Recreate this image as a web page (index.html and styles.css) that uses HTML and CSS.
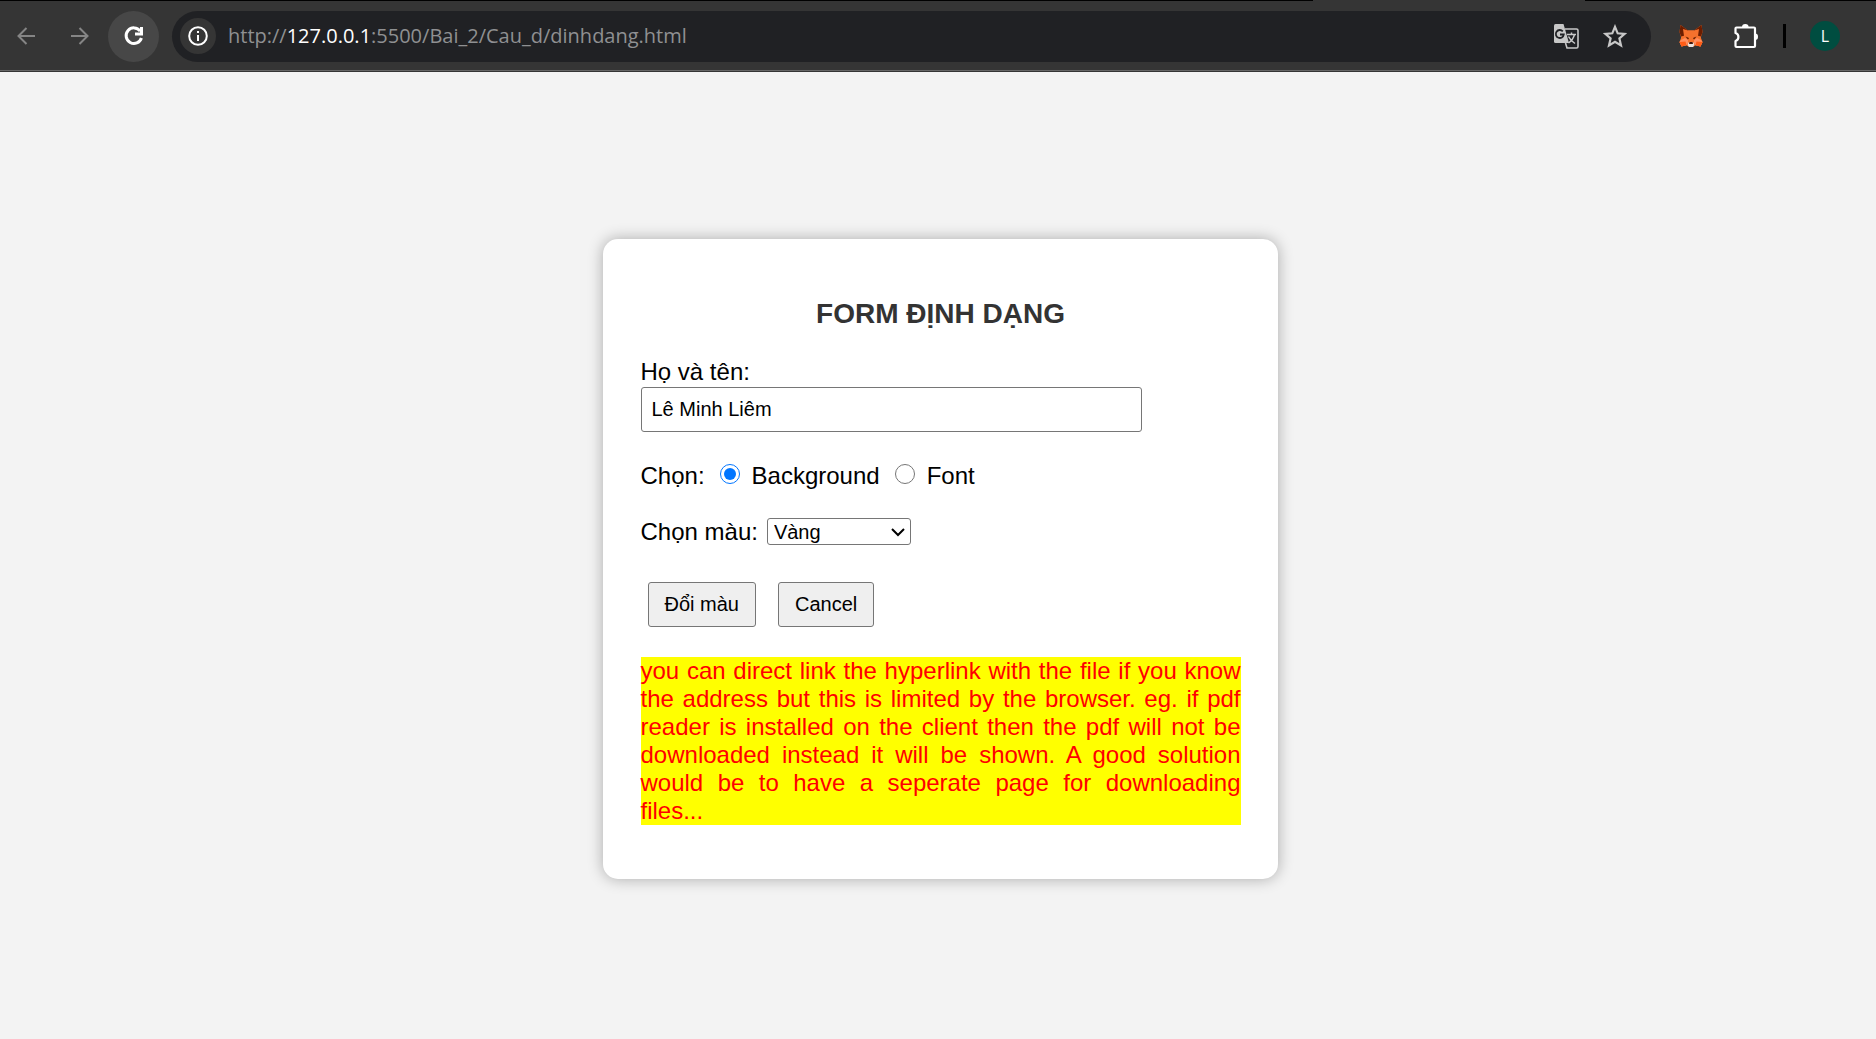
FILE: index.html
```html
<!DOCTYPE html>
<html lang="vi">
<head>
<meta charset="utf-8">
<title>Form định dạng</title>
<link rel="stylesheet" href="styles.css">
</head>
<body>
<header class="toolbar">
  <div class="tab-edge"></div>
  <nav class="nav">
    <button class="nav-btn dim" type="button" aria-label="Back"><svg width="18" height="18" viewBox="0 0 18 18"><path d="M18 9H2M9.500 1L1.500 9l8 8" /></svg></button>
    <button class="nav-btn dim" type="button" aria-label="Forward"><svg width="18" height="18" viewBox="0 0 18 18"><path d="M0 9h16M8.500 1l8 8-8 8" /></svg></button>
    <button class="nav-btn reload" type="button" aria-label="Reload"><svg width="20" height="20" viewBox="0 0 20 20"><path d="M16.200 5A7.800 7.800 0 1 0 17.400 12M17.500 1v7h-6.500" /></svg></button>
  </nav>
  <div class="omnibox">
    <button class="info" type="button" aria-label="Site information"><svg width="20" height="20" viewBox="0 0 20 20"><circle cx="10" cy="10" r="8.800" /><path d="M10 9v6M10 5v2" /></svg></button>
    <div class="url">http://<span class="host">127.0.0.1</span>:5500/Bai_2/Cau_d/dinhdang.html</div>
    <button class="box-btn" type="button" aria-label="Translate"><svg width="26" height="26" viewBox="0 0 26 26"><path d="M2.500 1h8L16 20H2.500Q1 20 1 18.500v-16Q1 1 2.500 1Z" fill="#c7c7c7"/><path d="M12 6h11.500Q25 6 25 7.500v16q0 1.500-1.500 1.500H14l-1.500-5" fill="none" stroke="#c7c7c7" stroke-width="1.600"/><path d="M9.800 8.300A4 4 0 1 0 10.800 11.500H7" fill="none" stroke="#202124" stroke-width="1.800"/><path d="M14 11.500h9M18.500 9.500v2M21.500 11.500q-1.500 5.500-6 8.500M15.500 13.500q2 4 6.500 7" fill="none" stroke="#c7c7c7" stroke-width="1.500"/></svg></button>
    <button class="box-btn" type="button" aria-label="Bookmark"><svg width="24" height="24" viewBox="0 0 24 24"><path d="M12 2.800l2.700 6.500 7 .6-5.300 4.600 1.600 6.900L12 17.700l-6 3.700 1.600-6.900L2.300 9.900l7-.6Z" fill="none" stroke="#c7c7c7" stroke-width="2.200"/></svg></button>
  </div>
  <div class="extensions">
    <button class="box-btn" type="button" aria-label="Wallet"><svg width="24" height="24" viewBox="0 0 24 24"><path d="M1.500 1L9 6.500h6L22.500 1l1 7-1.700 5.500L23.500 18l-2 4.500-5-1.300L14 23h-4l-2.500-1.800-5 1.300-2-4.500 1.700-4.500L.5 8Z" fill="#f5712d"/><path d="M1.500 1L9 6.500 8 11l-6 1.500L.5 8ZM22.500 1L15 6.500l1 4.500 6 1.500L23.500 8Z" fill="#6b1d00"/><path d="M4 5L9 6.500h6L20 5l-1 7 3 1.500-1 4H3l-1-4L5 12Z" fill="#f5712d"/><path d="M2 16l4-2 3 2v3l-1.500 2.200-5 1.300-2-4.500ZM22 16l-4-2-3 2v3l1.500 2.200 5 1.300 2-4.500Z" fill="#ff8d5d"/><path d="M.5 18l6-.5 1 3.700-5 1.300ZM23.500 18l-6-.5-1 3.700 5 1.300Z" fill="#ff5c16"/><path d="M6.500 12.500l3.500 1.500-1 1.500ZM17.500 12.500L14 14l1 1.500Z" fill="#551800"/><path d="M9.500 18.500h5l.8 2.500-1.300 2h-4l-1.300-2Z" fill="#e9e2df"/><path d="M10.500 18h3l.5 2h-4Z" fill="#40170b"/></svg></button>
    <button class="box-btn" type="button" aria-label="Extensions"><svg width="26" height="26" viewBox="0 0 26 26"><path d="M3.500 4.500H21Q22 4.500 22 5.500V23q0 1-1 1H3.500q-1 0-1-1v-5a4.200 4.200 0 0 0 0-8V5.500q0-1 1-1Z" fill="none" stroke="#fff" stroke-width="2.200" stroke-linejoin="round"/><path d="M9 4a3.300 3 0 0 1 6.600 0ZM22 10.500a3 3.300 0 0 1 0 6.600Z" fill="#fff"/></svg></button>
    <span class="divider"></span>
    <button class="avatar" type="button">L</button>
  </div>
</header>
<main class="page">
  <form class="card">
    <h2 class="title">FORM ĐỊNH DẠNG</h2>
    <div class="field">
      <label for="name">Họ và tên:</label>
      <input class="text" id="name" type="text" value="Lê Minh Liêm">
    </div>
    <div class="row" role="radiogroup" aria-label="Chọn">
      <span>Chọn:</span>
      <input class="radio" type="radio" name="target" id="bg" checked><label for="bg">Background</label>
      <input class="radio" type="radio" name="target" id="font"><label for="font">Font</label>
    </div>
    <div class="row">
      <label for="color">Chọn màu:</label>
      <span class="select-wrap">
        <select class="select" id="color"><option>Vàng</option></select>
        <svg class="chevron" width="14" height="10" viewBox="0 0 14 10"><path d="M1 2l6 6 6-6" fill="none" stroke="#000" stroke-width="2"/></svg>
      </span>
    </div>
    <div class="actions">
      <button class="btn" type="button">Đổi màu</button>
      <button class="btn" type="button">Cancel</button>
    </div>
    <p class="note">you can direct link the hyperlink with the file if you know the address but this is limited by the browser. eg. if pdf reader is installed on the client then the pdf will not be downloaded instead it will be shown. A good solution would be to have a seperate page for downloading files...</p>
  </form>
</main>
</body>
</html>
```
FILE: styles.css
```css
* { box-sizing: border-box; }

body {
  margin: 0;
  min-height: 100vh;
  display: flex;
  flex-direction: column;
  background: #f3f3f3;
  color: #000;
  font: 24px/28px "Liberation Sans", Arial, sans-serif;
}

button { border: 0; padding: 0; background: none; color: inherit; }
svg { display: block; }

/* Browser toolbar */
.toolbar {
  position: relative;
  display: flex;
  align-items: center;
  height: 72px;
  padding: 0 36px 0 0;
  background: #353535;
  border-top: 1px solid #000;
  border-bottom: 1px solid #353535;
  box-shadow: inset 0 -1px #666;
}
.tab-edge {
  position: absolute;
  top: -1px;
  left: 70%;
  width: 272px;
  height: 1px;
  background: #353535;
}
.nav { display: flex; gap: 3px; }
.nav-btn {
  display: grid;
  place-items: center;
  width: 51px;
  height: 51px;
  border-radius: 50%;
}
.nav-btn svg { fill: none; stroke: #fff; stroke-width: 3; }
.nav-btn.dim svg { stroke: #858585; stroke-width: 2; }
.nav-btn.reload { background: #474747; }
.omnibox {
  flex: 1;
  display: flex;
  align-items: center;
  gap: 24px;
  height: 51px;
  margin-left: 13px;
  padding: 0 24px 0 8px;
  border-radius: 26px;
  background: #202124;
}
.info {
  display: grid;
  place-items: center;
  width: 36px;
  height: 36px;
  border-radius: 50%;
  background: #353535;
}
.info svg { fill: none; stroke: #fff; stroke-width: 2; }
.url {
  flex: 1;
  margin-left: -12px;
  color: #8f9092;
  font: 20px/28px "Open Sans", "Noto Sans", sans-serif;
}
.host { color: #fff; }
.extensions { display: flex; align-items: center; margin-left: 28px; gap: 24px; }
.extensions .box-btn { margin-right: 6px; }
.divider { width: 3px; height: 24px; margin-left: -6px; background: #000; }
.avatar {
  width: 30px;
  height: 30px;
  border-radius: 50%;
  background: #004d40;
  color: #fff;
  font: 16px/30px "Open Sans", sans-serif;
}

/* Form */
.page {
  flex: 1;
  display: flex;
  justify-content: center;
  align-items: center;
  padding: 6px 0 0 4px;
}
.card {
  width: 675px;
  max-width: 100%;
  padding: 59px 37px 54px 38px;
  border-radius: 15px;
  background: #fff;
  box-shadow: 0 0 15px rgba(0, 0, 0, .3);
}
.title {
  margin: 0 0 28px;
  color: #333;
  font-size: 28px;
  line-height: 32px;
  text-align: center;
}
.field { display: flex; flex-direction: column; gap: 1px; margin-bottom: 30px; }
.text {
  width: 501px;
  max-width: 100%;
  height: 45px;
  padding: 0 10px;
  border: 1px solid #767676;
  border-radius: 3px;
  background: #fff;
  color: #000;
  font: 20px "Liberation Sans", Arial, sans-serif;
}
.row { display: flex; align-items: center; margin-bottom: 28px; height: 28px; }
.radio { width: 20px; height: 20px; margin: 0 12px 4px 15px; }
.select-wrap { display: grid; align-items: center; margin-left: 9px; }
.select {
  grid-area: 1 / 1;
  width: 144px;
  height: 27px;
  padding: 0 6px;
  appearance: none;
  border: 1px solid #767676;
  border-radius: 3px;
  background: #fff;
  color: #000;
  font: 20px "Liberation Sans", Arial, sans-serif;
}
.chevron { grid-area: 1 / 1; justify-self: end; margin-right: 6px; pointer-events: none; }
.actions { display: flex; gap: 22px; margin: 36px 0 30px; padding-left: 7px; }
.btn {
  height: 45px;
  padding: 0 16px;
  border: 1px solid #767676;
  border-radius: 3px;
  background: #efefef;
  color: #000;
  font: 20px "Liberation Sans", Arial, sans-serif;
}
.note { margin: 0; background: #ff0; color: #f00; text-align: justify; }
```
